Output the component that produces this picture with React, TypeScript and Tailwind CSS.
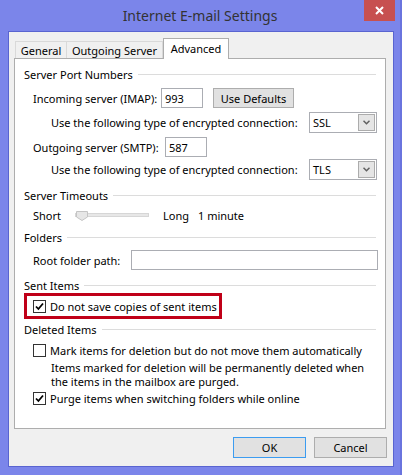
import React from 'react'

const font = { fontFamily: '"Noto Sans", "Liberation Sans", sans-serif' }

function SectionHeader({ title, className = '' }: { title: string; className?: string }) {
  return (
    <div className={`flex h-[14px] items-center pl-[9px] pr-[9px] ${className}`}>
      <span className="whitespace-nowrap leading-none">{title}</span>
      <div className="ml-[5px] h-px flex-1 bg-[#dcdcdc]" />
    </div>
  )
}

function Checkbox({ checked }: { checked?: boolean }) {
  return (
    <span className="flex h-[13px] w-[13px] shrink-0 items-center justify-center border border-[#333333] bg-white">
      {checked && (
        <svg width="9" height="9" viewBox="0 0 9 9">
          <path d="M1 4.5 L3.4 7 L8 1.5" fill="none" stroke="#000" strokeWidth="1.8" />
        </svg>
      )}
    </span>
  )
}

function Select({ value }: { value: string }) {
  return (
    <div className="flex h-[21px] w-[68px] items-center justify-between border border-[#abadb3] bg-white pl-[3px] pr-[1px]">
      <span className="leading-none">{value}</span>
      <span className="flex h-[17px] w-[17px] items-center justify-center border border-[#acacac] bg-[#e5e5e5]">
        <svg width="7" height="5" viewBox="0 0 7 5">
          <path d="M0.5 0.8 L3.5 3.8 L6.5 0.8" fill="none" stroke="#606060" strokeWidth="1.5" />
        </svg>
      </span>
    </div>
  )
}

export default function App() {
  return (
    <div
      className="relative h-[475px] w-[402px] overflow-hidden whitespace-nowrap border-r-2 border-[#6a74de] bg-[#7b85ea] text-[11px] text-black"
      style={font}
    >
      {/* Title bar */}
      <div className="relative flex h-[31px] items-center justify-center pb-[1px]">
        <span className="text-[14px] text-[#333333]">Internet E-mail Settings</span>
        <div className="absolute right-[5px] top-0 flex h-[21px] w-[31px] items-center justify-center bg-[#c75050]">
          <svg width="9" height="9" viewBox="0 0 9 9">
            <path d="M1 1 L8 8 M8 1 L1 8" stroke="#fff" strokeWidth="2" />
          </svg>
        </div>
      </div>

      {/* Client area */}
      <div className="ml-[8px] h-[436px] w-[386px] border border-[#5964d0] bg-[#f0f0f0] px-[5px]">
        {/* Tabs */}
        <div className="mt-[6px] flex h-[20px] items-end pl-[1px]">
          <div className="flex h-[17px] w-[52px] items-center justify-center border border-b-0 border-[#d9d9d9] bg-[#f0f0f0] leading-none">
            General
          </div>
          <div className="flex h-[17px] w-[96px] items-center justify-center border border-b-0 border-l-0 border-[#d9d9d9] bg-[#f0f0f0] leading-none">
            Outgoing Server
          </div>
          <div className="relative top-px z-10 flex h-[21px] w-[66px] items-center justify-center border border-b-0 border-[#adadad] bg-white pb-[2px] leading-none">
            Advanced
          </div>
        </div>

        {/* Tab panel */}
        <div className="flex h-[371px] w-[372px] flex-col border border-[#adadad] bg-white">
          <SectionHeader title="Server Port Numbers" className="mt-[8px]" />

          <div className="mt-[7px] flex h-[20px] items-center pl-[18px]">
            <span className="w-[128px] leading-none">Incoming server (IMAP):</span>
            <div className="flex h-[20px] w-[42px] items-center border border-[#abadb3] bg-white pl-[3px] leading-none">993</div>
            <div className="ml-[10px] flex h-[20px] w-[81px] items-center justify-center border border-[#adadad] bg-[#e1e1e1] leading-none">
              Use Defaults
            </div>
          </div>

          <div className="mt-[4px] flex h-[21px] items-center pl-[36px]">
            <span className="w-[258px] leading-none">Use the following type of encrypted connection:</span>
            <Select value="SSL" />
          </div>

          <div className="mt-[4px] flex h-[20px] items-center pl-[18px]">
            <span className="w-[132px] leading-none">Outgoing server (SMTP):</span>
            <div className="flex h-[20px] w-[42px] items-center border border-[#abadb3] bg-white pl-[3px] leading-none">587</div>
          </div>

          <div className="mt-[2px] flex h-[21px] items-center pl-[36px]">
            <span className="w-[258px] leading-none">Use the following type of encrypted connection:</span>
            <Select value="TLS" />
          </div>

          <SectionHeader title="Server Timeouts" className="mt-[8px]" />

          <div className="mt-[6px] flex h-[14px] items-center pl-[18px]">
            <span className="w-[42px] leading-none">Short</span>
            <div className="relative h-[4px] w-[74px] border border-[#d6d6d6] bg-[#e7e7e7]">
              <svg className="absolute left-0 top-[-3px]" width="12" height="10" viewBox="0 0 12 10">
                <path d="M0.5 0.5 H11.5 V6 L6 9.5 L0.5 6 Z" fill="#e6e6e6" stroke="#c4c4c4" />
              </svg>
            </div>
            <span className="ml-[14px] w-[35px] leading-none">Long</span>
            <span className="leading-none">1 minute</span>
          </div>

          <SectionHeader title="Folders" className="mt-[8px]" />

          <div className="mt-[6px] flex h-[20px] items-center pl-[18px]">
            <span className="w-[98px] leading-none">Root folder path:</span>
            <div className="h-[20px] w-[247px] border border-[#abadb3] bg-white" />
          </div>

          <SectionHeader title="Sent Items" className="mt-[8px]" />

          <div className="ml-[9px] mt-px flex h-[26px] w-[198px] items-center gap-[4px] border-[3px] border-[#c00018] pl-[6px]">
            <Checkbox checked />
            <span className="leading-none">Do not save copies of sent items</span>
          </div>

          <SectionHeader title="Deleted Items" className="mt-[3px]" />

          <div className="mt-[7px] flex h-[14px] items-center gap-[4px] pl-[18px]">
            <Checkbox />
            <span className="leading-none">Mark items for deletion but do not move them automatically</span>
          </div>

          <div className="mt-[4px] pl-[36px] leading-[14px]">
            Items marked for deletion will be permanently deleted when
            <br />
            the items in the mailbox are purged.
          </div>

          <div className="mt-[2px] flex h-[14px] items-center gap-[4px] pl-[18px]">
            <Checkbox checked />
            <span className="leading-none">Purge items when switching folders while online</span>
          </div>
        </div>

        {/* Buttons */}
        <div className="mt-[8px] flex justify-end gap-[8px] pr-[1px]">
          <div className="flex h-[21px] w-[73px] items-center justify-center border border-[#3c9cf0] bg-[#e1e1e1] leading-none">
            OK
          </div>
          <div className="flex h-[21px] w-[73px] items-center justify-center border border-[#adadad] bg-[#e1e1e1] leading-none">
            Cancel
          </div>
        </div>
      </div>
    </div>
  )
}
